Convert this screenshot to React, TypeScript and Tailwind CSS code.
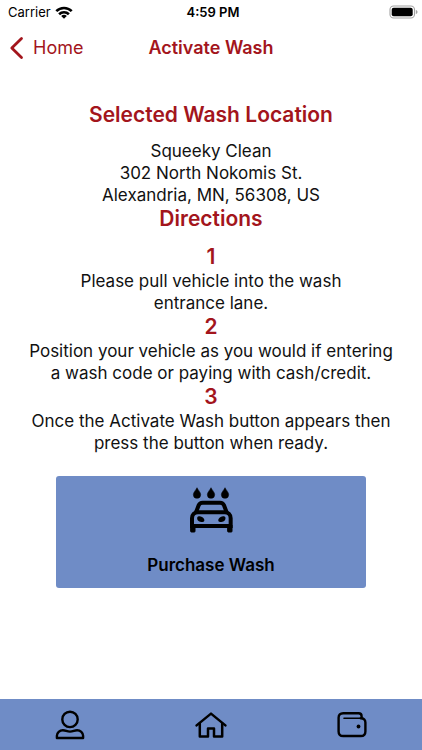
const steps = [
  "Please pull vehicle into the wash\nentrance lane.",
  "Position your vehicle as you would if entering\na wash code or paying with cash/credit.",
  "Once the Activate Wash button appears then\npress the button when ready.",
];

function StatusBar() {
  return (
    <div className="grid h-6 grid-cols-3 items-center pl-2 pr-1 text-[13px] leading-4 text-black">
      <div className="flex items-center gap-1">
        <span>Carrier</span>
        <svg width="18" height="13" viewBox="0 0 18 13" fill="none" stroke="currentColor" strokeWidth="2.6" aria-hidden="true">
          <path d="M1.3 5.1a11 11 0 0 1 15.4 0" />
          <path d="M4.1 8.2a7 7 0 0 1 9.8 0" />
          <path d="M9 12.8 6.2 10a3.9 3.9 0 0 1 5.6 0Z" fill="currentColor" stroke="none" />
        </svg>
      </div>
      <span className="text-center font-semibold">4:59 PM</span>
      <div className="flex justify-end">
        <svg width="29" height="14" viewBox="0 0 29 14" aria-hidden="true">
          <rect x="1" y="1" width="24.5" height="12" rx="3.6" fill="none" stroke="#a3a3a3" strokeWidth="1.1" />
          <rect x="2.7" y="2.7" width="21" height="8.6" rx="2" fill="#000" />
          <path d="M26.8 5c1.2.4 1.7 1.1 1.7 2s-.5 1.6-1.7 2Z" fill="#a3a3a3" />
        </svg>
      </div>
    </div>
  );
}

function CarWashIcon() {
  return (
    <svg width="43" height="46" viewBox="54 36 129 138" stroke="currentColor" aria-hidden="true">
      <path
        strokeWidth="1.5"
        d="M75 38c4 8 11 14 11 21a11 11 0 0 1-22 0c0-7 7-13 11-21ZM117 38c4 8 11 14 11 21a11 11 0 0 1-22 0c0-7 7-13 11-21ZM159 38c4 8 11 14 11 21a11 11 0 0 1-22 0c0-7 7-13 11-21Z"
      />
      <g fill="none" strokeWidth="12">
        <path d="M72 112 80 91c2-5 6-8 12-8h52c6 0 10 3 12 8l8 21" />
        <path d="M60 153v-23c0-11 7-18 18-18h80c11 0 18 7 18 18v23Z" />
      </g>
      <path strokeWidth="3" strokeLinejoin="round" d="M56 150h13v19q0 2-2 2h-9q-2 0-2-2ZM167 150h13v19q0 2-2 2h-9q-2 0-2-2Z" />
      <path stroke="none" d="M76 127c2-4 9-4 14-1 5 3 8 7 7 11-1 3-4 4-9 4-9 0-14-7-12-14ZM160 127c-2-4-9-4-14-1-5 3-8 7-7 11 1 3 4 4 9 4 9 0 14-7 12-14Z" />
    </svg>
  );
}

function UserIcon() {
  return (
    <svg width="30" height="30" viewBox="0 0 30 30" fill="none" stroke="currentColor" strokeWidth="2.4" aria-hidden="true">
      <circle cx="15" cy="9.4" r="7.7" />
      <path d="M1.9 28v-2.2c0-3.2 2.8-5.6 6-5.6 2.8 0 4 1.4 7.1 1.4s4.300-1.400 7.100-1.400c3.200 0 6 2.400 6 5.600V28Z" strokeLinejoin="round" />
    </svg>
  );
}

function HomeIcon() {
  return (
    <svg width="32" height="30" viewBox="0 0 32 30" fill="none" stroke="currentColor" strokeWidth="2.5" strokeLinecap="round" strokeLinejoin="round" aria-hidden="true">
      <path d="M1.6 15.4 16 3.6l14.4 11.8" />
      <path d="M4.800 13.600V26.400H13V18.400H19V26.400H27.200V13.600" />
    </svg>
  );
}

function WalletIcon() {
  return (
    <svg width="30" height="30" viewBox="0 0 30 30" fill="none" stroke="currentColor" strokeWidth="2.4" strokeLinecap="round" strokeLinejoin="round" aria-hidden="true">
      <path d="M24.600 8V6.200c0-2-1-3-3-3H6.200c-3 0-4.600 1.700-4.600 4.600v13.600c0 3 1.700 4.600 4.600 4.600h17.600c3 0 4.600-1.600 4.600-4.600v-8.800c0-3-1.600-4.300-4.600-4.300" />
      <path d="M7 8.300h16.800" strokeWidth="1.600" />
      <circle cx="21.500" cy="16.500" r="1.900" fill="currentColor" stroke="none" />
    </svg>
  );
}

export default function App() {
  return (
    <div className="flex min-h-screen flex-col bg-white font-['Inter',sans-serif] text-[#111111]">
      <StatusBar />

      <header className="grid h-12 grid-cols-[1fr_auto_1fr] items-center px-2 text-[#a3151c]">
        <a href="#home" className="flex items-center gap-2 text-lg">
          <svg width="17" height="24" viewBox="0 0 17 24" fill="none" stroke="currentColor" strokeWidth="2.8" strokeLinecap="round" strokeLinejoin="round" aria-hidden="true">
            <path d="M13.500 2.500 3.800 12l9.700 9.500" />
          </svg>
          Home
        </a>
        <h1 className="text-lg font-semibold">Activate Wash</h1>
      </header>

      <main className="flex-1 px-5 pt-[30px] text-center text-[17px] leading-[22px]">
        <h2 className="mb-3 text-[21px] font-semibold leading-[26px] text-[#a3151c]">
          Selected Wash Location
        </h2>
        <address className="not-italic">
          Squeeky Clean
          <br />
          302 North Nokomis St.
          <br />
          Alexandria, MN, 56308, US
        </address>
        <h2 className="mb-3 text-[21px] font-semibold leading-[26px] text-[#a3151c]">
          Directions
        </h2>
        {steps.map((step, i) => (
          <section key={step}>
            <h3 className="text-[21px] font-semibold leading-[26px] text-[#a3151c]">
              {i + 1}
            </h3>
            <p className="whitespace-pre-line">{step}</p>
          </section>
        ))}

        <div className="px-9">
          <button
            type="button"
            className="mt-[22px] flex h-28 w-full flex-col items-center justify-between rounded-[3px] bg-[#6f8cc6] pb-3 pt-[11px] font-semibold text-black"
          >
            <CarWashIcon />
            Purchase Wash
          </button>
        </div>
      </main>

      <nav className="grid h-[51px] grid-cols-3 bg-[#6f8cc6] text-black">
        <a href="#account" aria-label="Account" className="flex items-center justify-center">
          <UserIcon />
        </a>
        <a href="#home" aria-label="Home" className="flex items-center justify-center">
          <HomeIcon />
        </a>
        <a href="#wallet" aria-label="Wallet" className="flex items-center justify-center">
          <WalletIcon />
        </a>
      </nav>
    </div>
  );
}
